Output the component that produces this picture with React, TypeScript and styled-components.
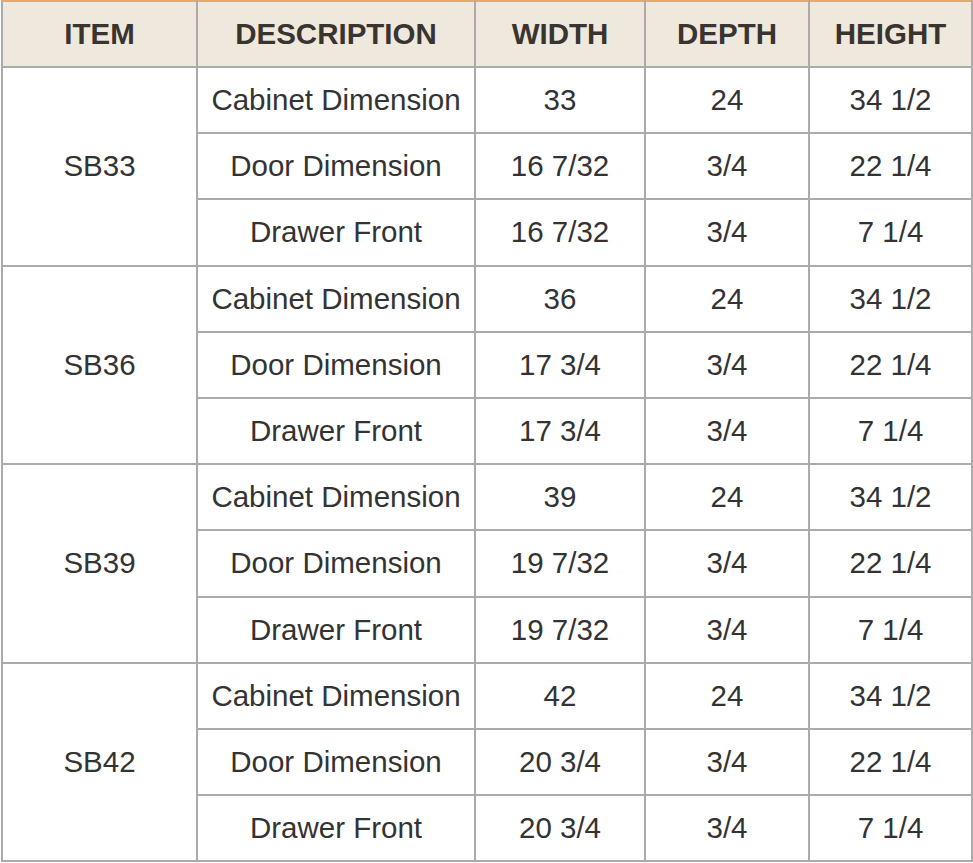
import styled, { createGlobalStyle } from 'styled-components';

const GlobalStyle = createGlobalStyle`
  html, body {
    margin: 0;
    padding: 0;
    background: #ffffff;
  }
`;

const Wrapper = styled.div`
  padding: 0 1px 0 1px;
  font-family: 'Liberation Sans', Arial, sans-serif;
`;

const Table = styled.table`
  width: 970px;
  border-collapse: collapse;
  table-layout: fixed;
  font-size: 29.5px;
  color: #333333;
`;

const HeadCell = styled.th`
  height: 64px;
  padding: 0;
  background-color: #efe9dd;
  color: #3a3431;
  font-weight: bold;
  text-align: center;
  border: 2px solid #ababab;
  border-top: 2px solid #eaa868;
`;

const Cell = styled.td`
  height: 64.2px;
  padding: 0;
  text-align: center;
  vertical-align: middle;
  border: 2px solid #ababab;
  white-space: nowrap;
`;

type Row = { desc: string; width: string; depth: string; height: string };
type Item = { code: string; rows: Row[] };

const items: Item[] = [
  { code: 'SB33', widths: ['33', '16 7/32', '16 7/32'] },
  { code: 'SB36', widths: ['36', '17 3/4', '17 3/4'] },
  { code: 'SB39', widths: ['39', '19 7/32', '19 7/32'] },
  { code: 'SB42', widths: ['42', '20 3/4', '20 3/4'] },
].map(({ code, widths }) => ({
  code,
  rows: [
    { desc: 'Cabinet Dimension', width: widths[0], depth: '24', height: '34 1/2' },
    { desc: 'Door Dimension', width: widths[1], depth: '3/4', height: '22 1/4' },
    { desc: 'Drawer Front', width: widths[2], depth: '3/4', height: '7 1/4' },
  ],
}));

const App = () => {
  return (
    <Wrapper>
      <GlobalStyle />
      <Table>
        <colgroup>
          <col style={{ width: 195 }} />
          <col style={{ width: 278 }} />
          <col style={{ width: 170 }} />
          <col style={{ width: 164 }} />
          <col style={{ width: 163 }} />
        </colgroup>
        <thead>
          <tr>
            <HeadCell>ITEM</HeadCell>
            <HeadCell>DESCRIPTION</HeadCell>
            <HeadCell>WIDTH</HeadCell>
            <HeadCell>DEPTH</HeadCell>
            <HeadCell>HEIGHT</HeadCell>
          </tr>
        </thead>
        <tbody>
          {items.map((item) =>
            item.rows.map((row, i) => (
              <tr key={item.code + i}>
                {i === 0 && <Cell rowSpan={3}>{item.code}</Cell>}
                <Cell>{row.desc}</Cell>
                <Cell>{row.width}</Cell>
                <Cell>{row.depth}</Cell>
                <Cell>{row.height}</Cell>
              </tr>
            ))
          )}
        </tbody>
      </Table>
    </Wrapper>
  );
};

export default App;
